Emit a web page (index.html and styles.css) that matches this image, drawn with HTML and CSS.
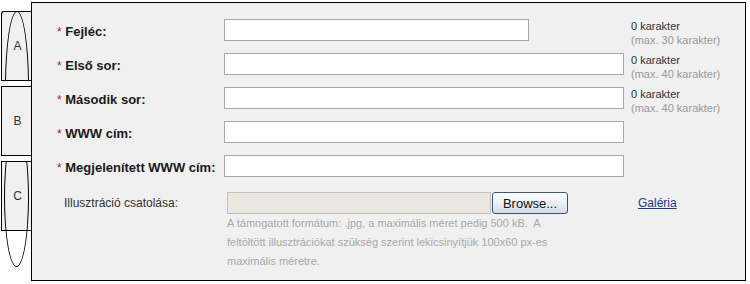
FILE: index.html
```html
<!DOCTYPE html>
<html lang="hu">
  <head>
    <meta charset="UTF-8" />
    <title>Hirdetés szerkesztése</title>
    <link rel="stylesheet" href="styles.css">
  </head>
  <body>
    <div class="page">
      <div class="tabs">
        <div class="tab tab-a"><span>A</span></div>
        <div class="tab tab-b"><span>B</span></div>
        <div class="tab tab-c"><span>C</span></div>
      </div>

      <div class="panel">
        <div class="row">
          <label class="label"><span class="req">*</span> Fejléc:</label>
          <div class="field"><input type="text" class="text short"></div>
          <div class="counter">
            <div class="count">0 karakter</div>
            <div class="limit">(max. 30 karakter)</div>
          </div>
        </div>
        <div class="row">
          <label class="label"><span class="req">*</span> Első sor:</label>
          <div class="field"><input type="text" class="text"></div>
          <div class="counter">
            <div class="count">0 karakter</div>
            <div class="limit">(max. 40 karakter)</div>
          </div>
        </div>
        <div class="row">
          <label class="label"><span class="req">*</span> Második sor:</label>
          <div class="field"><input type="text" class="text"></div>
          <div class="counter">
            <div class="count">0 karakter</div>
            <div class="limit">(max. 40 karakter)</div>
          </div>
        </div>
        <div class="row">
          <label class="label"><span class="req">*</span> WWW cím:</label>
          <div class="field"><input type="text" class="text"></div>
          <div class="counter"></div>
        </div>
        <div class="row">
          <label class="label"><span class="req">*</span> Megjelenített WWW cím:</label>
          <div class="field"><input type="text" class="text"></div>
          <div class="counter"></div>
        </div>

        <div class="row file-row">
          <label class="label plain">Illusztráció csatolása:</label>
          <div class="field">
            <div class="upload">
              <div class="upload-path"></div>
              <button type="button" class="browse">Browse...</button>
            </div>
            <p class="hint">
              A támogatott formátum: .jpg, a maximális méret pedig 500 kB.&nbsp; A
              feltöltött illusztrációkat szükség szerint lekicsinyítjük 100x60 px-es
              maximális méretre.
            </p>
          </div>
          <div class="counter">
            <a href="#" class="gallery">Galéria</a>
          </div>
        </div>
      </div>
    </div>
  </body>
</html>
```

FILE: styles.css
```css
body {
  margin: 0;
  background-color: white;
  font-family: Tahoma, "Liberation Sans", Arial, sans-serif;
  color: #222;
}

.page {
  display: flex;
  align-items: flex-start;
  padding: 2px 0 0 1px;
}

/* left side tabs */
.tabs {
  width: 30px;
  margin-top: 9px;
}

.tab {
  position: relative;
  box-sizing: border-box;
  height: 70px;
  margin-bottom: 5px;
  border: 1px solid #000;
  border-right: none;
  background-color: #f0f0f0;
  display: flex;
  align-items: center;
  justify-content: center;
  font-size: 12px;
  color: #333;
}

.tab span {
  position: relative;
  z-index: 2;
  padding-left: 2px;
}

.tab-a {
  border-top-left-radius: 3px;
  overflow: hidden;
}

.tab-a::before {
  content: "";
  position: absolute;
  left: 3px;
  top: -1px;
  width: 22px;
  height: 150px;
  border: 1px solid #000;
  border-radius: 50%;
}

.tab-b::before {
  content: "";
  position: absolute;
  left: -1px;
  top: 0;
  width: 29px;
  height: 21px;
  border-left: 1px solid #000;
  border-right: 1px solid #000;
}

.tab-c::before {
  content: "";
  position: absolute;
  left: 2px;
  top: -34px;
  width: 23px;
  height: 137px;
  border: 1px solid #000;
  border-radius: 50%;
  clip-path: inset(34px 0 0 0);
}

/* main form panel */
.panel {
  box-sizing: border-box;
  width: 715px;
  height: 279px;
  border: 1px solid #000;
  background-color: #f0f0f0;
  padding: 16px 0 0 25px;
}

.row {
  display: grid;
  grid-template-columns: 167px 407px 1fr;
  height: 34px;
}

.label {
  font-size: 13px;
  font-weight: bold;
  line-height: 22px;
  padding-top: 2px;
  color: #1a1a1a;
  white-space: nowrap;
}

.req {
  color: #b3201c;
  font-weight: normal;
  font-size: 12px;
}

.text {
  display: block;
  box-sizing: border-box;
  width: 400px;
  height: 22px;
  margin: 0;
  border: 1px solid #a7a7a7;
  background-color: white;
}

.text.short {
  width: 305px;
}

.counter {
  font-size: 11px;
  line-height: 14px;
}

.count {
  color: #333;
}

.limit {
  color: #999;
}

/* file upload row */
.file-row {
  height: auto;
  margin-top: 3px;
}

.label.plain {
  font-size: 12px;
  font-weight: normal;
  padding-left: 7px;
  padding-top: 0;
  color: #333;
}

.upload {
  display: flex;
  margin-left: 3px;
  height: 22px;
}

.upload-path {
  box-sizing: border-box;
  width: 264px;
  height: 22px;
  border: 1px solid #c2c0b8;
  background-color: #e9e7e0;
}

.browse {
  box-sizing: border-box;
  width: 76px;
  height: 22px;
  margin-left: 1px;
  padding: 0;
  border: 1px solid #36557f;
  border-radius: 3px;
  background: linear-gradient(#ffffff, #e8ebf2 60%, #d5dae6);
  font-family: "Liberation Sans", Arial, sans-serif;
  font-size: 13px;
  color: #111;
}

.hint {
  margin: 0 0 0 3px;
  font-size: 11px;
  line-height: 19px;
  color: #a8a8a8;
  width: 330px;
}

.gallery {
  display: block;
  margin-left: 7px;
  line-height: 22px;
  font-size: 12px;
  color: #1c3b8e;
}
```
